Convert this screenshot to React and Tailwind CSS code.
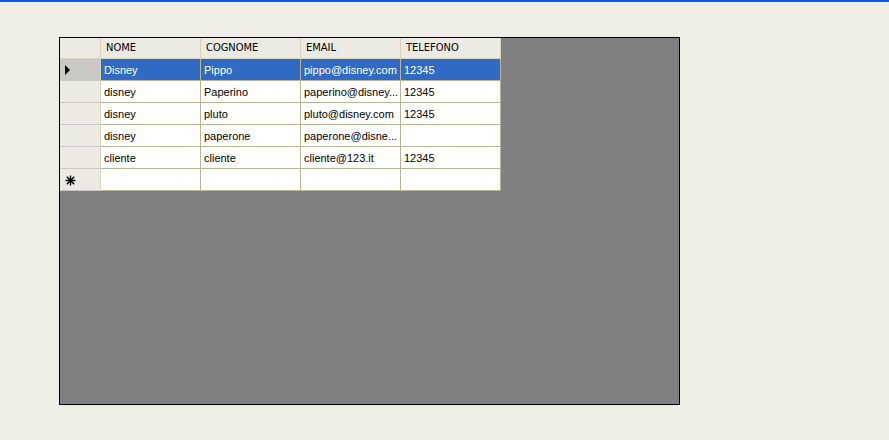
const COLS = ['NOME', 'COGNOME', 'EMAIL', 'TELEFONO'];

const ROWS = [
  ['Disney', 'Pippo', 'pippo@disney.com', '12345'],
  ['disney', 'Paperino', 'paperino@disney...', '12345'],
  ['disney', 'pluto', 'pluto@disney.com', '12345'],
  ['disney', 'paperone', 'paperone@disne...', ''],
  ['cliente', 'cliente', 'cliente@123.it', '12345'],
];

function RowHead({ selected, newRow }) {
  return (
    <div
      className={`w-[41px] h-full flex items-center pl-[5px] border-r border-b border-r-[#d8d4b8] ${
        selected ? 'bg-[#c9c8c3] border-b-[#c9c8c3]' : 'bg-[#ecebe3] border-b-[#cdc6c6]'
      }`}
    >
      {selected && (
        <svg width="6" height="10" viewBox="0 0 6 10">
          <path d="M0 0 L5 5 L0 10 Z" fill="#000" />
        </svg>
      )}
      {newRow && (
        <svg width="11" height="11" viewBox="0 0 11 11" className="mt-[1px]">
          <path d="M5.5 0.5 V10.5 M0.5 5.5 H10.5 M1.8 1.8 L9.2 9.2 M9.2 1.8 L1.8 9.2" stroke="#000" strokeWidth="1.4" />
        </svg>
      )}
    </div>
  );
}

function Row({ cells, selected, newRow }) {
  return (
    <div className="flex h-[22px]">
      <RowHead selected={selected} newRow={newRow} />
      {cells.map((c, i) => (
        <div
          key={i}
          className={`w-[100px] h-full flex items-center pl-[3px] pt-[1px] border-r border-b border-[#b9b592] whitespace-nowrap overflow-hidden text-[11px] ${
            selected ? 'bg-[#316ac5] text-white' : 'bg-white text-black'
          }`}
        >
          {c}
        </div>
      ))}
    </div>
  );
}

export default function App() {
  return (
    <div
      className="w-[889px] h-[440px] bg-[#eeede6] border-t-2 border-[#0a5ae6] overflow-hidden"
      style={{ fontFamily: '"Liberation Sans", Arial, sans-serif' }}
    >
      <div className="ml-[59px] mt-[35px] w-[621px] h-[368px] border border-black bg-[#808080]">
        <div className="w-[441px]">
          <div className="flex h-[21px] bg-[#ecebe3] border-b border-[#d8d4c0]">
            <div className="w-[41px] border-r border-[#d8d4b8]" />
            {COLS.map((c) => (
              <div
                key={c}
                className="w-[100px] flex items-center pl-[5px] border-r border-[#d8d4b8] text-[11px] text-black"
                style={{ fontFamily: '"DejaVu Sans Condensed", "DejaVu Sans", sans-serif' }}
              >
                {c}
              </div>
            ))}
          </div>
          {ROWS.map((r, i) => (
            <Row key={i} cells={r} selected={i === 0} />
          ))}
          <Row cells={['', '', '', '']} newRow />
        </div>
      </div>
    </div>
  );
}
